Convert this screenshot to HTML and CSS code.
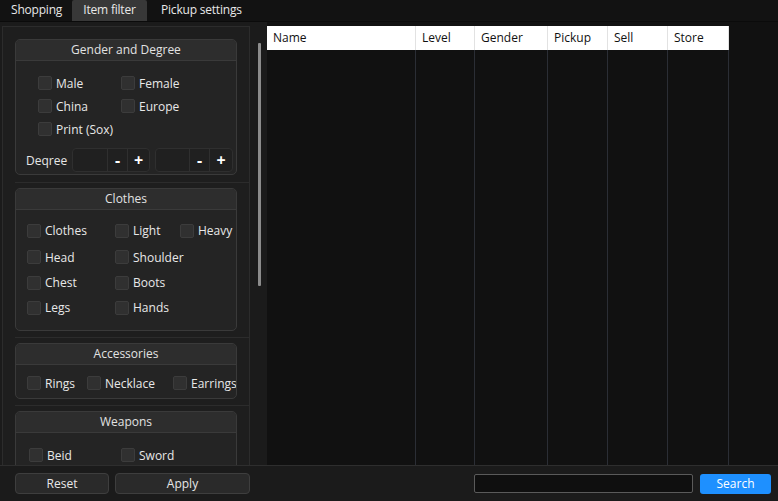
FILE: index.html
```html
<!DOCTYPE html>
<html>
<head>
<meta charset="utf-8">
<link rel="stylesheet" href="styles.css">
</head>
<body>
<div class="tabs">
  <div class="tab first">Shopping</div>
  <div class="tab active">Item filter</div>
  <div class="tab last">Pickup settings</div>
</div>
<div class="main">
  <div class="left">
    <div class="frame">
      <div class="group">
        <div class="ghead">Gender and Degree</div>
        <div class="gbody g1">
          <div class="grid g1grid">
            <label class="chk"><span class="cb"></span>Male</label>
            <label class="chk"><span class="cb"></span>Female</label>
            <label class="chk"><span class="cb"></span>China</label>
            <label class="chk"><span class="cb"></span>Europe</label>
            <label class="chk"><span class="cb"></span>Print (Sox)</label>
          </div>
          <div class="degree">
            <span class="dlabel">Deqree</span>
            <div class="spin"><span class="sin"></span><span class="sbtn minus">-</span><span class="sbtn plus">+</span></div>
            <div class="spin spin2"><span class="sin"></span><span class="sbtn minus">-</span><span class="sbtn plus">+</span></div>
          </div>
        </div>
      </div>
      <div class="sep sep-first"></div>
      <div class="group">
        <div class="ghead">Clothes</div>
        <div class="gbody g2">
          <div class="grid g2grid">
            <label class="chk"><span class="cb"></span>Clothes</label>
            <label class="chk"><span class="cb"></span>Light</label>
            <label class="chk"><span class="cb"></span>Heavy</label>
            <label class="chk"><span class="cb"></span>Head</label>
            <label class="chk"><span class="cb"></span>Shoulder</label>
            <span></span>
            <label class="chk"><span class="cb"></span>Chest</label>
            <label class="chk"><span class="cb"></span>Boots</label>
            <span></span>
            <label class="chk"><span class="cb"></span>Legs</label>
            <label class="chk"><span class="cb"></span>Hands</label>
            <span></span>
          </div>
        </div>
      </div>
      <div class="sep"></div>
      <div class="group">
        <div class="ghead">Accessories</div>
        <div class="gbody g3">
          <div class="grid g3grid">
            <label class="chk"><span class="cb"></span>Rings</label>
            <label class="chk"><span class="cb"></span>Necklace</label>
            <label class="chk"><span class="cb"></span>Earrings</label>
          </div>
        </div>
      </div>
      <div class="sep"></div>
      <div class="group">
        <div class="ghead">Weapons</div>
        <div class="gbody g4">
          <div class="grid g4grid">
            <label class="chk"><span class="cb"></span>Beid</label>
            <label class="chk"><span class="cb"></span>Sword</label>
          </div>
        </div>
      </div>
    </div>
    <div class="gutter"><div class="thumb"></div></div>
  </div>
  <div class="right">
    <div class="table">
      <div class="col c1"><div class="th">Name</div><div class="td"></div></div>
      <div class="col c2"><div class="th">Level</div><div class="td"></div></div>
      <div class="col c3"><div class="th">Gender</div><div class="td"></div></div>
      <div class="col c4"><div class="th">Pickup</div><div class="td"></div></div>
      <div class="col c5"><div class="th">Sell</div><div class="td"></div></div>
      <div class="col c6"><div class="th">Store</div><div class="td"></div></div>
    </div>
  </div>
</div>
<div class="bottom">
  <button class="btn reset">Reset</button>
  <button class="btn apply">Apply</button>
  <div class="spacer"></div>
  <input class="search-input" type="text">
  <button class="search-btn">Search</button>
</div>
</body>
</html>
```
FILE: styles.css
```css
* { box-sizing: border-box; }
html, body { margin: 0; padding: 0; }
body {
  width: 778px;
  height: 501px;
  overflow: hidden;
  background: #111111;
  color: #e6e6e6;
  font-family: "Open Sans", "Noto Sans", sans-serif;
  font-size: 12px;
  display: flex;
  flex-direction: column;
}

.tabs {
  height: 22px;
  display: flex;
  background: #121212;
  border-bottom: 1px solid #0b0b0b;
  flex: none;
  letter-spacing: -0.2px;
}
.tab {
  height: 21px;
  line-height: 20px;
  color: #e8e8e8;
}
.tab.first { width: 72px; padding-left: 11px; }
.tab.active {
  width: 75px;
  text-align: center;
  background: #383838;
  border-radius: 2px 2px 0 0;
}
.tab.last { padding-left: 14px; }

.main {
  flex: none;
  height: 443px;
  display: flex;
}
.left {
  width: 267px;
  flex: none;
  background: #1b1b1b;
  padding-top: 4px;
  display: flex;
}
.frame {
  width: 248px;
  margin-left: 2px;
  border: 1px solid #2c2c2c;
  border-bottom: none;
  background: #1e1e1e;
  padding: 12px 12px 0 12px;
  overflow: hidden;
}
.gutter {
  width: 17px;
  padding-left: 8px;
  padding-top: 17px;
}
.thumb {
  width: 3px;
  height: 243px;
  background: #8c8c8c;
  border-radius: 1px;
}

.group {
  border: 1px solid #3a3a3a;
  border-radius: 5px;
  background: #242424;
  overflow: hidden;
}
.ghead {
  height: 21px;
  line-height: 20px;
  text-align: center;
  background: #2d2d2d;
  border-bottom: 1px solid #3a3a3a;
  color: #e2e2e2;
}
.sep {
  height: 1px;
  background: #2c2c2c;
  margin: 6px -12px 5px 0;
}
.sep.sep-first { margin-top: 7px; }

.grid { display: grid; }
.chk {
  display: flex;
  align-items: center;
  gap: 4px;
  white-space: nowrap;
  color: #e8e8e8;
}
.cb {
  width: 14px;
  height: 14px;
  flex: none;
  background: #303030;
  border: 1px solid #3c3c3c;
  border-radius: 2px;
}

.g1 { padding: 10px 0 2px 0; }
.g1grid {
  padding-left: 22px;
  grid-template-columns: 83px 83px;
  grid-auto-rows: 23px;
}
.g1grid .chk { padding-top: 1px; }
.degree {
  display: flex;
  align-items: center;
  margin-top: 8px;
  padding-left: 10px;
  gap: 5px;
}
.dlabel { width: 41px; }
.spin {
  display: flex;
  width: 78px;
  height: 24px;
  border: 1px solid #2f2f2f;
  border-radius: 4px;
  background: #202020;
}
.sin { width: 35px; border-right: 1px solid #2f2f2f; }
.sbtn {
  display: flex;
  align-items: center;
  justify-content: center;
  color: #ffffff;
  font-weight: 700;
  font-size: 16px;
  line-height: 1;
}
.minus { width: 20px; border-right: 1px solid #2f2f2f; }
.plus { flex: 1; }
.spin2 .sin { width: 34px; }

.g2 { padding: 7px 0 10px 0; }
.g2grid {
  padding-left: 11px;
  grid-template-columns: 88px 65px 50px;
  grid-template-rows: 27px 26px 25px 25px;
}
.g3 { padding: 6px 0 3px 0; }
.g3grid {
  padding-left: 11px;
  grid-template-columns: 60px 86px 60px;
  grid-auto-rows: 24px;
}
.g4 { padding: 10px 0 20px 0; }
.g4grid {
  padding-left: 13px;
  grid-template-columns: 92px 80px;
  grid-auto-rows: 24px;
}

.right {
  flex: 1;
  padding-top: 4px;
  background: #111111;
}
.table {
  display: flex;
  height: 100%;
}
.col { display: flex; flex-direction: column; }
.th {
  height: 24px;
  line-height: 23px;
  background: #ffffff;
  color: #111111;
  padding-left: 6px;
  border-right: 1px solid #e2e2e2;
}
.td {
  flex: 1;
  border-right: 1px solid #2b2e35;
}
.c1 { width: 149px; }
.c2 { width: 59px; }
.c3 { width: 73px; }
.c4 { width: 60px; }
.c5 { width: 60px; }
.c6 { width: 61px; }

.bottom {
  flex: 1;
  display: flex;
  align-items: center;
  background: #1b1b1b;
  border-top: 1px solid #2e2e2e;
  padding: 0 7px 0 15px;
}
.btn {
  height: 21px;
  background: #2a2a2a;
  border: 1px solid #3e3e3e;
  border-radius: 4px;
  color: #e8e8e8;
  font-family: inherit;
  font-size: 12px;
  padding: 0;
}
.reset { width: 94px; }
.apply { width: 135px; margin-left: 6px; }
.spacer { flex: 1; }
.search-input {
  width: 219px;
  height: 19px;
  background: #0f0f0f;
  border: 1px solid #5a5a5a;
  border-radius: 2px;
  margin-right: 7px;
  outline: none;
}
.search-btn {
  width: 71px;
  height: 20px;
  background: #1e90ff;
  border: none;
  border-radius: 3px;
  color: #ffffff;
  font-family: inherit;
  font-size: 12px;
  padding: 0;
}
```
